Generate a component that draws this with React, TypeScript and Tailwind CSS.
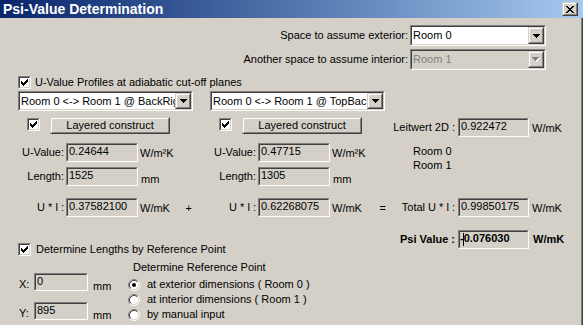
import React from 'react';

function Sunken({ className = '', inner = '', children }: { className?: string; inner?: string; children?: React.ReactNode }) {
  return (
    <div className={`shrink-0 border border-t-[#808080] border-l-[#808080] border-b-white border-r-white ${className}`}>
      <div className={`h-full w-full border border-t-[#404040] border-l-[#404040] border-b-[#d4d0c8] border-r-[#d4d0c8] overflow-hidden ${inner}`}>
        {children}
      </div>
    </div>
  );
}

function Raised({ className = '', children }: { className?: string; children?: React.ReactNode }) {
  return (
    <div className={`shrink-0 border border-t-[#d4d0c8] border-l-[#d4d0c8] border-b-[#404040] border-r-[#404040] bg-[#d4d0c8] ${className}`}>
      <div className="h-full w-full border border-t-white border-l-white border-b-[#808080] border-r-[#808080] flex items-center justify-center">
        {children}
      </div>
    </div>
  );
}

function Arrow({ disabled }: { disabled?: boolean }) {
  if (disabled) {
    return (
      <svg width="8" height="5" viewBox="0 0 8 5" shapeRendering="crispEdges">
        <path d="M1 1h7v1h-1v1h-1v1h-1v1h-1v-1h-1v-1h-1v-1h-1z" fill="#ffffff" />
        <path d="M0 0h7v1h-1v1h-1v1h-1v1h-1v-1h-1v-1h-1v-1h-1z" fill="#808080" />
      </svg>
    );
  }
  return (
    <svg width="7" height="4" viewBox="0 0 7 4" shapeRendering="crispEdges">
      <path d="M0 0h7v1h-1v1h-1v1h-1v1h-1v-1h-1v-1h-1v-1h-1z" fill="#000000" />
    </svg>
  );
}

function Combo({ className, value, disabled }: { className: string; value: string; disabled?: boolean }) {
  return (
    <Sunken className={className} inner={disabled ? 'bg-[#d4d0c8]' : 'bg-white'}>
      <div className="flex h-full">
        <span className={`flex-1 min-w-0 overflow-hidden whitespace-nowrap pl-[1px] self-center ${disabled ? 'text-[#808080]' : 'text-black'}`}>
          {value}
        </span>
        <Raised className="w-[16px] h-full">
          <Arrow disabled={disabled} />
        </Raised>
      </div>
    </Sunken>
  );
}

function Field({ className, value, bold, caret }: { className: string; value: string; bold?: boolean; caret?: boolean }) {
  return (
    <Sunken className={className} inner="bg-[#d4d0c8]">
      <div className={`pl-[1px] pt-[1px] whitespace-nowrap flex items-start ${bold ? 'font-bold' : ''}`}>
        {caret && <span className="inline-block w-px h-[13px] bg-black -mr-[4px] ml-[2px]" />}
        <span>{value}</span>
      </div>
    </Sunken>
  );
}

function Check() {
  return (
    <Sunken className="w-[13px] h-[13px]" inner="bg-white flex items-center justify-center">
      <svg width="7" height="7" viewBox="0 0 7 7" shapeRendering="crispEdges">
        <path
          d="M6 0h1v3h-1v1h-1v1h-1v1h-1v1h-1v-1h-1v-1h-1v-3h1v1h1v1h1v-1h1v-1h1v-1h1z"
          fill="#000"
        />
      </svg>
    </Sunken>
  );
}

function Radio({ checked }: { checked?: boolean }) {
  return (
    <svg width="12" height="12" viewBox="0 0 12 12" className="shrink-0">
      <circle cx="6" cy="6" r="5" fill="#ffffff" />
      <path d="M2.11 9.89 A5.5 5.5 0 0 1 9.89 2.11" fill="none" stroke="#808080" strokeWidth="1" />
      <path d="M9.89 2.11 A5.5 5.5 0 0 1 2.11 9.89" fill="none" stroke="#ffffff" strokeWidth="1" />
      <path d="M2.82 9.18 A4.5 4.5 0 0 1 9.18 2.82" fill="none" stroke="#404040" strokeWidth="1" />
      <path d="M9.18 2.82 A4.5 4.5 0 0 1 2.82 9.18" fill="none" stroke="#d4d0c8" strokeWidth="1" />
      {checked && <circle cx="6" cy="6" r="2" fill="#000000" />}
    </svg>
  );
}

function CloseGlyph() {
  return (
    <svg width="8" height="7" viewBox="0 0 8 7" shapeRendering="crispEdges">
      <path
        d="M0 0h2v1h-2z M6 0h2v1h-2z M1 1h2v1h-2z M5 1h2v1h-2z M2 2h4v1h-4z M3 3h2v1h-2z M2 4h4v1h-4z M1 5h2v1h-2z M5 5h2v1h-2z M0 6h2v1h-2z M6 6h2v1h-2z"
        fill="#000"
      />
    </svg>
  );
}

export default function App() {
  return (
    <div className="w-[583px] h-[325px] overflow-hidden bg-[#d4d0c8] font-['Liberation_Sans',Arial,sans-serif] text-[11px] leading-none text-black">
      {/* Title bar */}
      <div className="h-[18px] flex items-center justify-between bg-linear-to-r from-[#0a246a] to-[#a6caf0] pl-[3px] pr-[5px]">
        <span className="text-white font-bold text-[14px]">Psi-Value Determination</span>
        <Raised className="w-[16px] h-[14px]">
          <CloseGlyph />
        </Raised>
      </div>

      <div className="flex h-[307px]">
        <div className="w-[581px] flex flex-col">
          {/* Space selection */}
          <div className="flex flex-col items-end pr-[35px] pt-[7px] gap-[3px]">
            <div className="flex items-center gap-[2px]">
              <span>Space to assume exterior:</span>
              <Combo className="w-[136px] h-[21px]" value="Room 0" />
            </div>
            <div className="flex items-center gap-[2px]">
              <span>Another space to assume interior:</span>
              <Combo className="w-[136px] h-[21px]" value="Room 1" disabled />
            </div>
          </div>

          {/* U-Value profiles checkbox */}
          <div className="mt-[6px] ml-[18px] flex items-center gap-[4px] h-[13px]">
            <Check />
            <span>U-Value Profiles at adiabatic cut-off planes</span>
          </div>

          {/* profile combos */}
          <div className="mt-[2px] ml-[18px] flex gap-[17px]">
            <Combo className="w-[175px] h-[20px]" value="Room 0 <-> Room 1 @ BackRig" />
            <Combo className="w-[175px] h-[20px]" value="Room 0 <-> Room 1 @ TopBac" />
          </div>

          {/* main area */}
          <div className="mt-[6px] flex">
            {/* left part */}
            <div className="w-[392px] flex flex-col">
              <div className="h-[20px] flex items-start">
                <div className="ml-[27px] mt-[1px]">
                  <Check />
                </div>
                <Raised className="ml-[10px] w-[120px] h-[17px]">
                  <span>Layered construct</span>
                </Raised>
                <div className="ml-[49px] mt-[1px]">
                  <Check />
                </div>
                <Raised className="ml-[10px] w-[120px] h-[17px]">
                  <span>Layered construct</span>
                </Raised>
              </div>

              <div className="mt-[6px] h-[19px] grid grid-cols-[66px_72px_58px_62px_72px_62px]">
                <span className="self-center text-right pr-[2px]">U-Value:</span>
                <Field className="h-[19px]" value="0.24644" />
                <span className="pl-[2px] pt-[5px]">W/m²K</span>
                <span className="self-center text-right pr-[2px]">U-Value:</span>
                <Field className="h-[19px]" value="0.47715" />
                <span className="pl-[2px] pt-[5px]">W/m²K</span>
              </div>

              <div className="mt-[5px] h-[19px] grid grid-cols-[66px_72px_58px_62px_72px_62px]">
                <span className="self-center text-right pr-[2px]">Length:</span>
                <Field className="h-[19px]" value="1525" />
                <span className="pl-[3px] pt-[7px]">mm</span>
                <span className="self-center text-right pr-[2px]">Length:</span>
                <Field className="h-[19px]" value="1305" />
                <span className="pl-[3px] pt-[7px]">mm</span>
              </div>

              <div className="mt-[12px] h-[19px] grid grid-cols-[66px_72px_58px_62px_72px_62px]">
                <span className="self-center text-right pr-[2px]">U * l :</span>
                <Field className="h-[19px]" value="0.37582100" />
                <span className="pl-[2px] pt-[5px] flex justify-between pr-[4px]">
                  <span>W/mK</span>
                  <span>+</span>
                </span>
                <span className="self-center text-right pr-[2px]">U * l :</span>
                <Field className="h-[19px]" value="0.62268075" />
                <span className="pl-[2px] pt-[5px] flex justify-between pr-[6px]">
                  <span>W/mK</span>
                  <span>=</span>
                </span>
              </div>

              {/* Determine lengths */}
              <div className="mt-[26px] ml-[18px] flex items-center gap-[5px] h-[13px]">
                <Check />
                <span>Determine Lengths by Reference Point</span>
              </div>

              <div className="flex">
                <div className="w-[128px] flex flex-col">
                  <div className="mt-[17px] h-[18px] flex">
                    <span className="w-[34px] pl-[19px] pt-[6px]">X:</span>
                    <Field className="w-[54px] h-[18px]" value="0" />
                    <span className="pl-[5px] pt-[8px]">mm</span>
                  </div>
                  <div className="mt-[11px] h-[18px] flex">
                    <span className="w-[34px] pl-[19px] pt-[6px]">Y:</span>
                    <Field className="w-[54px] h-[18px]" value="895" />
                    <span className="pl-[5px] pt-[8px]">mm</span>
                  </div>
                </div>
                <div className="flex flex-col">
                  <span className="mt-[6px] pl-[5px] h-[12px]">Determine Reference Point</span>
                  <div className="mt-[3px] flex flex-col">
                    <div className="h-[15px] flex items-center gap-[7px]">
                      <Radio checked />
                      <span>at exterior dimensions ( Room 0 )</span>
                    </div>
                    <div className="h-[15px] flex items-center gap-[7px]">
                      <Radio />
                      <span>at interior dimensions ( Room 1 )</span>
                    </div>
                    <div className="h-[15px] flex items-center gap-[7px]">
                      <Radio />
                      <span>by manual input</span>
                    </div>
                  </div>
                </div>
              </div>
            </div>

            {/* right part */}
            <div className="flex-1 flex flex-col">
              <div className="mt-[1px] h-[19px] flex">
                <span className="w-[66px] self-center text-right pr-[3px]">Leitwert 2D :</span>
                <Field className="w-[71px] h-[19px]" value="0.922472" />
                <span className="pl-[3px] pt-[5px]">W/mK</span>
              </div>
              <div className="mt-[7px] pl-[21px] flex flex-col leading-[14px]">
                <span>Room 0</span>
                <span>Room 1</span>
              </div>
              <div className="mt-[26px] h-[19px] flex">
                <span className="w-[66px] self-center text-right pr-[3px] whitespace-nowrap">Total U * l :</span>
                <Field className="w-[71px] h-[19px]" value="0.99850175" />
                <span className="pl-[3px] pt-[5px]">W/mK</span>
              </div>
              <div className="mt-[13px] h-[19px] flex">
                <span className="w-[66px] self-center text-right pr-[3px] font-bold whitespace-nowrap">Psi Value :</span>
                <Field className="w-[71px] h-[19px]" value="-0.076030" bold caret />
                <span className="pl-[4px] pt-[4px] font-bold">W/mK</span>
              </div>
            </div>
          </div>
        </div>
        <div className="w-[2px] flex">
          <div className="w-px bg-[#808080]" />
          <div className="w-px bg-[#404040]" />
        </div>
      </div>
    </div>
  );
}
